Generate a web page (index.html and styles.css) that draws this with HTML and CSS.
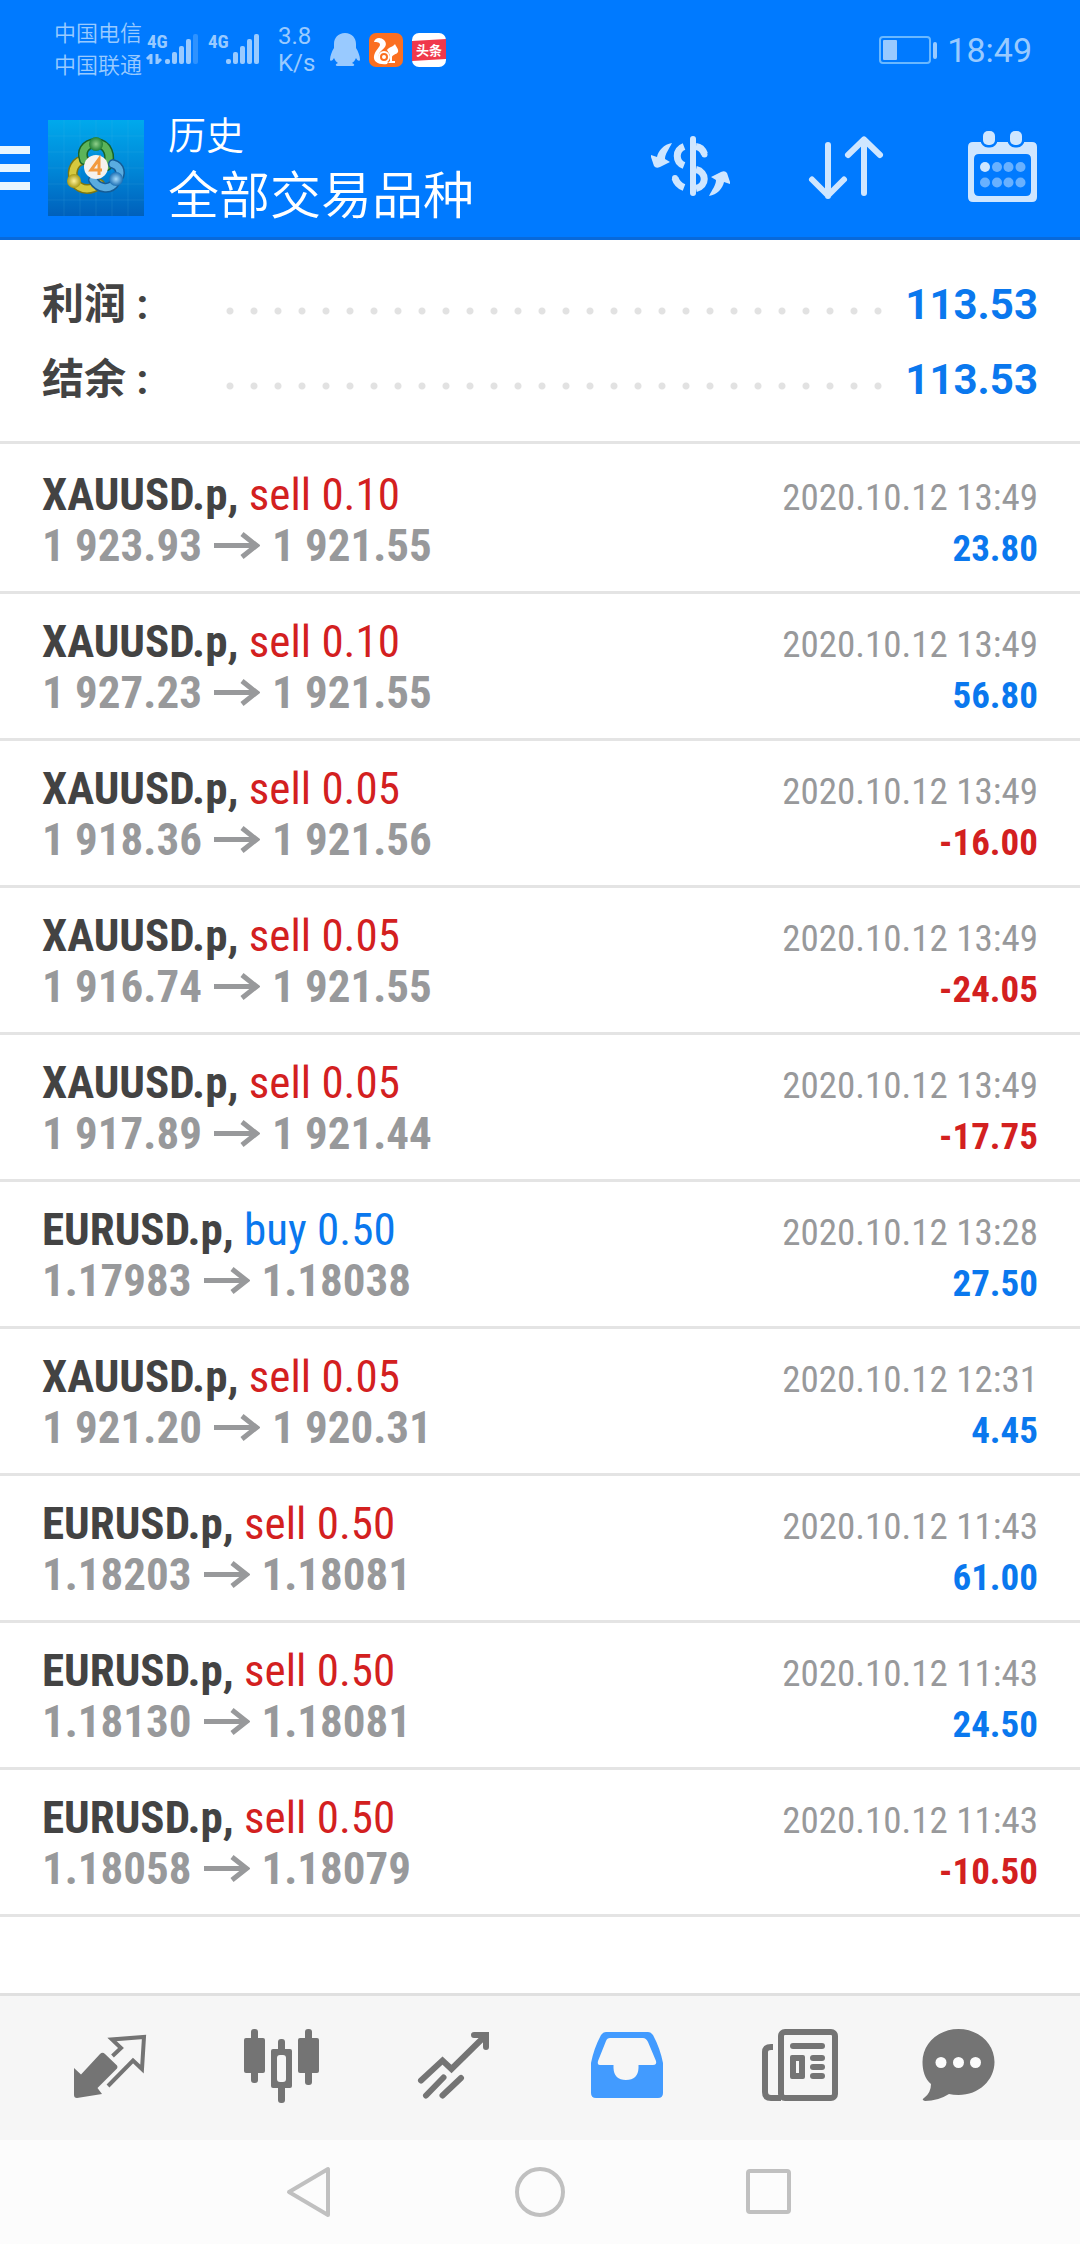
FILE: index.html
```html
<!DOCTYPE html>
<html lang="zh-CN">
<head>
<meta charset="utf-8">
<meta name="viewport" content="width=device-width, initial-scale=1">
<title>历史</title>
<link rel="stylesheet" href="styles.css">
</head>
<body>
<svg class="sprite" aria-hidden="true">
  <symbol id="arrow" viewBox="0 0 46 27"><path d="M0 13.5H42M28 2L42.5 13.500L28 25" fill="none" stroke="currentColor" stroke-width="5"/></symbol>
</svg>

<header class="top">
  <div class="status">
    <div class="carriers"><span>中国电信</span><span>中国联通</span></div>
    <svg class="signal" viewBox="0 0 52 34" aria-label="4G">
      <text class="net" x="0" y="15">4G</text>
      <path d="M4 21V31M0 26L4 22M10 21V31M14 26L10 30" fill="none" stroke="currentColor" stroke-width="3"/>
      <rect x="18" y="26" width="5" height="5" rx="2"/><rect x="25" y="19" width="5" height="12" rx="2"/><rect x="32" y="13" width="5" height="18" rx="2"/><rect x="39" y="6" width="5" height="25" rx="2"/><rect x="46" y="1" width="5" height="30" rx="2" opacity=".3"/>
    </svg>
    <svg class="signal second" viewBox="0 0 52 34" aria-label="4G">
      <text class="net" x="0" y="15">4G</text>
      <rect x="18" y="26" width="5" height="5" rx="2"/><rect x="25" y="19" width="5" height="12" rx="2"/><rect x="32" y="13" width="5" height="18" rx="2"/><rect x="39" y="6" width="5" height="25" rx="2"/><rect x="46" y="1" width="5" height="30" rx="2"/>
    </svg>
    <div class="speed"><span>3.8</span><span>K/s</span></div>
    <svg class="penguin" viewBox="0 0 30 34"><path d="M15 0C8 0 4 5 4 11V15C2 18 0 23 0 27C1 29 3 27 4 25C5 27 6 29 8 30C5 31 5 33 8 33H22C25 33 25 31 22 30C24 29 25 27 26 25C27 27 29 29 30 27C30 23 28 18 26 15V11C26 5 22 0 15 0Z" fill="currentColor"/></svg>
    <svg class="app" viewBox="0 0 34 34">
      <rect width="34" height="34" rx="7" fill="#fb6f20"/>
      <path d="M5 9C6 4 12 4 15 7C19 11 16 15 12 18C8 22 9 27 14 29H19L18 31C10 32 4 29 5 23C6 18 10 15 11 12C11 9 8 9 5 9Z" fill="#fff"/>
      <path d="M18 17C20 14 24 14 26 11C27 14 30 16 29 19C27 22 24 21 23 24V28H26V30H19L21 28V22Z" fill="#fff"/>
      <circle cx="15" cy="24" r="5" fill="#fb6f20" stroke="#fff" stroke-width="2"/><circle cx="15" cy="24" r="2" fill="#fff"/>
    </svg>
    <svg class="app" viewBox="0 0 34 34">
      <rect width="34" height="34" rx="7" fill="#fff"/>
      <path d="M0 8L34 6V26L0 28Z" fill="#f0384c"/>
      <text class="toutiao" x="4" y="22">头条</text>
    </svg>
    <svg class="battery" viewBox="0 0 60 28"><rect x="1" y="1" width="50" height="26" rx="3" fill="none" stroke="#6ab8ff" stroke-width="2"/><rect x="4" y="4" width="14" height="20" rx="1" fill="#99caff"/><rect x="54" y="6" width="4" height="17" rx="2" fill="#99caff"/></svg>
    <time class="clock">18:49</time>
  </div>

  <div class="bar">
    <button class="menu" aria-label="菜单"><i></i><i></i><i></i></button>
    <svg class="logo" viewBox="0 0 96 96">
      <defs>
        <linearGradient id="sky" x1="0" y1="0" x2="0" y2="1"><stop offset="0" stop-color="#00a9ec"/><stop offset=".5" stop-color="#0088d8"/><stop offset="1" stop-color="#0060bb"/></linearGradient>
        <radialGradient id="green"><stop offset="0" stop-color="#8fd08a"/><stop offset="1" stop-color="#1f7f35"/></radialGradient>
        <radialGradient id="gold"><stop offset="0" stop-color="#fff29a"/><stop offset="1" stop-color="#a89a15"/></radialGradient>
        <radialGradient id="blue"><stop offset="0" stop-color="#a8dcfa"/><stop offset="1" stop-color="#1b6fb5"/></radialGradient>
      </defs>
      <rect width="96" height="96" fill="url(#sky)"/>
      <path d="M16 0V96M32 0V96M48 0V96M64 0V96M80 0V96M0 16H96M0 32H96M0 48H96M0 64H96M0 80H96" stroke="#4fc0ee" stroke-opacity=".15"/>
      <g fill="none" stroke-linecap="round">
        <path d="M26 60C22 50 28 40 37 40M26 62C34 72 44 70 52 64" stroke="#7d7710" stroke-width="10"/>
        <path d="M26 60C22 50 28 40 37 40M26 62C34 72 44 70 52 64" stroke="#d6c93e" stroke-width="7"/>
        <path d="M48 23C36 24 33 32 36 40M48 23C60 24 64 36 59 46" stroke="#17632a" stroke-width="10"/>
        <path d="M48 23C36 24 33 32 36 40M48 23C60 24 64 36 59 46" stroke="#5cb45a" stroke-width="7"/>
        <path d="M68 60C75 54 72 46 65 44M68 61C62 72 50 68 45 60" stroke="#155c96" stroke-width="10"/>
        <path d="M68 60C75 54 72 46 65 44M68 61C62 72 50 68 45 60" stroke="#5aace0" stroke-width="7"/>
      </g>
      <circle cx="48" cy="24" r="7" fill="url(#green)"/><circle cx="26" cy="61" r="7" fill="url(#gold)"/><circle cx="68" cy="59" r="7" fill="url(#blue)"/>
      <circle cx="48" cy="47" r="12" fill="#f5f2ee"/>
      <path d="M51 55V39L43 50H54" fill="none" stroke="#f29a3e" stroke-width="3"/>
    </svg>
    <div class="titles"><h1>历史</h1><p>全部交易品种</p></div>
    <div class="tools">
      <button aria-label="货币">
        <svg viewBox="0 -4 96 96"><g transform="translate(2 0)">
          <path d="M49 15V69" fill="none" stroke="currentColor" stroke-width="6" stroke-linecap="round"/>
          <path d="M40 22.500C31 26 31 38 40 41.500M52 22.500C57 23 59 26 60.500 30M52 45.500C63 48 63 62 52 64.500M31 54C32.500 59 36 62 40 63.500" fill="none" stroke="currentColor" stroke-width="7"/>
          <circle cx="60.500" cy="30.500" r="3" fill="currentColor"/><circle cx="31" cy="54" r="3" fill="currentColor"/>
          <path id="swap" d="M28 19C20 20 14 27 13 33L7 31V33L10 42Q12 45 16 43L26 38L21 35C21 30 25 25 28 19Z" fill="currentColor"/>
          <use href="#swap" transform="rotate(180 46.500 45.500)"/>
        </g></svg>
      </button>
      <button aria-label="排序">
        <svg viewBox="0 -4 96 96"><path d="M30 21V72M14 55.500L30 71.500L46 55.500M66 69V16M50 31L66 15.500L82 31" fill="none" stroke="currentColor" stroke-width="6" stroke-linecap="round" stroke-linejoin="round"/></svg>
      </button>
      <button aria-label="日期">
        <svg viewBox="0 -4 96 96">
          <path fill-rule="evenodd" d="M19 18H78Q83 18 83 23V73Q83 78 78 78H19Q14 78 14 73V23Q14 18 19 18ZM25 30Q20 30 20 35V67Q20 72 25 72H72Q77 72 77 67V35Q77 30 72 30Z" fill="currentColor"/>
          <g fill="currentColor" stroke="#007aff" stroke-width="5" paint-order="stroke"><rect x="29" y="7" width="12" height="14" rx="5"/><rect x="56" y="7" width="12" height="14" rx="5"/></g>
          <circle cx="31" cy="43" r="5" fill="currentColor"/>
          <g fill="#69b1ff"><circle cx="43" cy="43" r="5"/><circle cx="54.500" cy="43" r="5"/><circle cx="66.500" cy="43" r="5"/><circle cx="31" cy="58.500" r="5"/><circle cx="43" cy="58.500" r="5"/><circle cx="54.500" cy="58.500" r="5"/><circle cx="66.500" cy="58.500" r="5"/></g>
        </svg>
      </button>
    </div>
  </div>
</header>

<main>
  <dl class="summary">
    <div><dt>利润 :</dt><dd>113.53</dd></div>
    <div><dt>结余 :</dt><dd>113.53</dd></div>
  </dl>

  <ul class="deals">
    <li><p class="what"><b>XAUUSD.p,</b> <span class="sell">sell 0.10</span></p><time>2020.10.12 13:49</time><p class="price">1 923.93<svg><use href="#arrow"/></svg>1 921.55</p><p class="gain">23.80</p></li>
    <li><p class="what"><b>XAUUSD.p,</b> <span class="sell">sell 0.10</span></p><time>2020.10.12 13:49</time><p class="price">1 927.23<svg><use href="#arrow"/></svg>1 921.55</p><p class="gain">56.80</p></li>
    <li><p class="what"><b>XAUUSD.p,</b> <span class="sell">sell 0.05</span></p><time>2020.10.12 13:49</time><p class="price">1 918.36<svg><use href="#arrow"/></svg>1 921.56</p><p class="gain loss">-16.00</p></li>
    <li><p class="what"><b>XAUUSD.p,</b> <span class="sell">sell 0.05</span></p><time>2020.10.12 13:49</time><p class="price">1 916.74<svg><use href="#arrow"/></svg>1 921.55</p><p class="gain loss">-24.05</p></li>
    <li><p class="what"><b>XAUUSD.p,</b> <span class="sell">sell 0.05</span></p><time>2020.10.12 13:49</time><p class="price">1 917.89<svg><use href="#arrow"/></svg>1 921.44</p><p class="gain loss">-17.75</p></li>
    <li><p class="what"><b>EURUSD.p,</b> <span class="buy">buy 0.50</span></p><time>2020.10.12 13:28</time><p class="price">1.17983<svg><use href="#arrow"/></svg>1.18038</p><p class="gain">27.50</p></li>
    <li><p class="what"><b>XAUUSD.p,</b> <span class="sell">sell 0.05</span></p><time>2020.10.12 12:31</time><p class="price">1 921.20<svg><use href="#arrow"/></svg>1 920.31</p><p class="gain">4.45</p></li>
    <li><p class="what"><b>EURUSD.p,</b> <span class="sell">sell 0.50</span></p><time>2020.10.12 11:43</time><p class="price">1.18203<svg><use href="#arrow"/></svg>1.18081</p><p class="gain">61.00</p></li>
    <li><p class="what"><b>EURUSD.p,</b> <span class="sell">sell 0.50</span></p><time>2020.10.12 11:43</time><p class="price">1.18130<svg><use href="#arrow"/></svg>1.18081</p><p class="gain">24.50</p></li>
    <li><p class="what"><b>EURUSD.p,</b> <span class="sell">sell 0.50</span></p><time>2020.10.12 11:43</time><p class="price">1.18058<svg><use href="#arrow"/></svg>1.18079</p><p class="gain loss">-10.50</p></li>
  </ul>
</main>

<nav class="tabs">
  <button aria-label="行情"><svg viewBox="0 0 120 120">
    <path d="M26 60L33 66.500L52 46Q54.500 43.500 57 46L69 57.500Q70 59 69 60.500L49.500 80L54 86L29 90Q26 90 26 87Z" fill="currentColor"/>
    <path d="M64.500 48L73 40L64 31.500L96 29L94 61L85 52.500L60 78" fill="none" stroke="currentColor" stroke-width="4"/></svg></button>
  <button aria-label="图表"><svg viewBox="0 0 120 120">
    <g fill="currentColor"><rect x="23" y="30" width="21" height="35" rx="2"/><rect x="30" y="21" width="7" height="54" rx="3"/><rect x="77" y="30" width="21" height="35" rx="2"/><rect x="84" y="21" width="7" height="56" rx="3"/><rect x="57" y="31" width="7" height="64" rx="3"/><rect x="50" y="41" width="21" height="39" rx="2"/></g>
    <rect x="56" y="47" width="9" height="27" rx="3" fill="#f6f6f6"/></svg></button>
  <button aria-label="交易"><svg viewBox="0 0 120 120"><path d="M27 72.500L48.500 52.500L57.500 61L91 28M80 27H92V39M32 87.500L49.500 69.500M48.500 87.500L67 70" fill="none" stroke="currentColor" stroke-width="6" stroke-linecap="round"/></svg></button>
  <button class="on" aria-label="历史" aria-current="page"><svg viewBox="0 0 120 120"><path fill-rule="evenodd" fill="currentColor" d="M40 24H82Q85 24 87 27Q94 40 97 55V85Q97 90 92 90H30Q25 90 25 85V55Q28 40 35 27Q37 24 40 24ZM44 30Q41 30 40 33L32 53Q31 57 34 57H47.500V60Q48 72 60 72Q72 72 72.500 60V57H87Q91 57 90 53L82 34Q80 30 77 30Z"/></svg></button>
  <button aria-label="新闻"><svg viewBox="0 0 120 120"><g fill="none" stroke="currentColor" stroke-width="6"><rect x="42" y="24" width="54" height="66" rx="4"/><path d="M34 39H32Q26 39 26 44V84Q26 90 32 90H42"/></g>
    <g fill="currentColor"><rect x="51" y="35" width="35" height="6" rx="3"/><path fill-rule="evenodd" d="M53 47H64Q66 47 66 49V69Q66 71 64 71H53Q51 71 51 69V49Q51 47 53 47ZM57 53V65H60V53Z"/><rect x="71" y="47" width="15" height="6" rx="3"/><rect x="71" y="56" width="15" height="6" rx="3"/><rect x="71" y="65" width="15" height="6" rx="3"/></g></svg></button>
  <button aria-label="消息"><svg viewBox="0 0 120 120"><path d="M46.500 21C67 21 82.500 36 82.500 54C82.500 72 67 87 46.500 87Q41 87 37 86Q26 93 13 93Q9 92 12 90Q19 85 19 76C13 71 10.500 63 10.500 54C10.500 36 26 21 46.500 21Z" fill="currentColor"/><g fill="#fcfcfc"><circle cx="29" cy="54.500" r="5.500"/><circle cx="46.500" cy="54.500" r="5.500"/><circle cx="63.500" cy="54.500" r="5.500"/></g></svg></button>
</nav>

<nav class="system">
  <button aria-label="返回"><svg viewBox="0 0 60 60"><path d="M47 7V53L8 30Z"/></svg></button>
  <button aria-label="主屏幕"><svg viewBox="0 0 60 60"><circle cx="30" cy="30" r="23"/></svg></button>
  <button aria-label="最近任务"><svg viewBox="0 0 60 60"><rect x="9" y="9" width="41" height="41" rx="2"/></svg></button>
</nav>
</body>
</html>
```
FILE: styles.css
```css
* { box-sizing: border-box; margin: 0; padding: 0; }

body {
  display: flex;
  flex-direction: column;
  min-height: 100vh;
  background: #fff;
  color: #434343;
  font-family: Roboto, "Noto Sans CJK SC", sans-serif;
}

button { border: 0; background: none; color: inherit; font: inherit; cursor: pointer; }
svg { display: block; flex: none; overflow: visible; }
.sprite { position: absolute; width: 0; height: 0; }

/* status bar and title bar */
.top { background: #007aff; border-bottom: 3px solid #0869da; color: #fff; }

.status { display: flex; align-items: center; height: 99px; padding: 0 48px 0 54px; color: #99caff; }
.carriers, .speed { display: flex; flex-direction: column; }
.carriers { font-size: 22px; line-height: 32px; font-weight: 350; }
.speed { margin-left: 18px; width: 34px; font-size: 24px; line-height: 27px; }
.signal { width: 52px; height: 34px; margin-left: 5px; fill: currentColor; }
.signal.second { margin-left: 9px; }
.net { font: 700 19px "Roboto Condensed", Roboto, sans-serif; }
.penguin { width: 30px; height: 34px; margin-left: 18px; }
.app { width: 34px; height: 34px; margin-left: 9px; }
.toutiao { font: 700 13px "Noto Sans CJK SC", sans-serif; fill: #fff; }
.battery { width: 60px; height: 28px; margin-left: auto; }
.clock { margin-left: 8px; font-size: 34px; line-height: 40px; }

.bar { display: flex; align-items: center; height: 138px; padding-right: 30px; }
.menu { display: flex; flex-direction: column; gap: 10px; width: 30px; margin-right: 18px; }
.menu i { height: 8px; background: #e8f6ff; }
.logo { width: 96px; height: 96px; margin-right: 24px; }
.titles { flex: 1; padding-top: 4px; font-weight: 350; }
.titles h1 { font-size: 38px; line-height: 54px; font-weight: inherit; }
.titles p { font-size: 51px; line-height: 68px; }
.tools { display: flex; gap: 60px; color: #cfe6ff; }
.tools svg { width: 96px; height: 96px; }

/* totals */
.summary {
  padding: 27px 42px 24px;
  border-bottom: 3px solid #e4e4e4;
  font-size: 42px;
  line-height: 75px;
  font-weight: 700;
}
.summary div { display: flex; }
.summary dt { width: 176px; }
.summary dd { display: flex; flex: 1; color: #0a78ee; }
.summary dd::before {
  content: "";
  flex: 1;
  margin-right: 18px;
  background: radial-gradient(circle, #e2e2e2 3px, transparent 4px) 0 32px / 24px 24px repeat-x;
}

/* closed deals */
main { flex: 1; }
.deals { margin-top: 3px; list-style: none; font-family: "Roboto Condensed", Roboto, sans-serif; }
.deals li {
  display: grid;
  grid-template-columns: 1fr auto;
  align-items: baseline;
  padding: 22px 42px 20px;
  border-bottom: 3px solid #e4e4e4;
  line-height: 51px;
}
.what, .price { font-size: 45px; }
.deals time, .gain { font-size: 37px; line-height: 44px; text-align: right; }
.deals time { color: #98999b; }
.price { display: flex; align-items: center; color: #98999b; font-weight: 700; }
.price svg { width: 46px; height: 27px; margin: 0 12px; }
.gain { color: #0a78ee; font-weight: 700; }
.sell, .gain.loss { color: #d3201f; }
.buy { color: #0a78ee; }

/* app tabs */
.tabs { display: flex; padding: 0 22px; border-top: 3px solid #e0e0e0; background: #f6f6f6; color: #747474; }
.tabs button { display: flex; flex: 1; justify-content: center; padding: 12px 0; }
.tabs svg { width: 120px; height: 120px; }
.tabs .on { color: #429bff; }

/* system navigation */
.system { display: flex; justify-content: center; gap: 169px; padding: 22px 0; background: #fcfcfc; }
.system svg { width: 60px; height: 60px; fill: none; stroke: #c0c0c0; stroke-width: 4; stroke-linejoin: round; }
```
